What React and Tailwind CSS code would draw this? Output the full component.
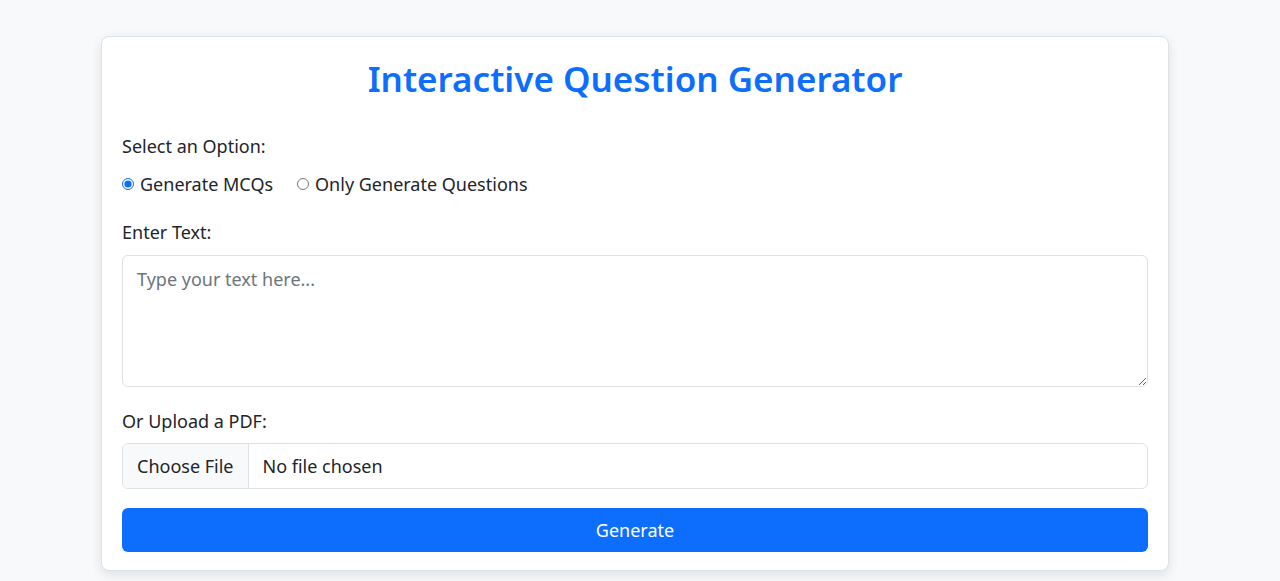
import { useState } from "react";

export default function App() {
  const [mode, setMode] = useState("mcq");
  const [text, setText] = useState("");

  return (
    <div
      className="min-h-screen bg-[#f8f9fa] pt-9 pb-[10px] text-[#212529]"
      style={{ fontFamily: '"Noto Sans", "Open Sans", sans-serif' }}
    >
      <div className="ml-[101px] w-[1068px] rounded-lg border border-[#dee2e6] bg-white px-5 pt-[16px] pb-[18px] shadow-[0_4px_12px_rgba(0,0,0,0.1)]">
        {/* Heading */}
        <h1 className="text-center text-[35px] font-semibold leading-[52px] text-[#0d6efd]">
          Interactive Question Generator
        </h1>

        {/* Mode */}
        <p className="mt-[29px] text-[18px] leading-[24px]">Select an Option:</p>
        <div className="mt-[14px] flex items-center gap-6 text-[18px] leading-[24px]">
          <label className="flex items-center gap-[6px]">
            <input
              type="radio"
              name="mode"
              checked={mode === "mcq"}
              onChange={() => setMode("mcq")}
              className="m-0 h-3 w-3 accent-[#0d6efd]"
            />
            Generate MCQs
          </label>
          <label className="flex items-center gap-[6px]">
            <input
              type="radio"
              name="mode"
              checked={mode === "questions"}
              onChange={() => setMode("questions")}
              className="m-0 h-3 w-3 accent-[#0d6efd]"
            />
            Only Generate Questions
          </label>
        </div>

        {/* Text input */}
        <p className="mt-6 text-[18px] leading-[24px]">Enter Text:</p>
        <textarea
          value={text}
          onChange={(e) => setText(e.target.value)}
          placeholder="Type your text here..."
          className="mt-[11px] block h-[132px] w-full rounded-md border border-[#dee2e6] px-[14px] py-[10px] text-[18px] leading-[26px] placeholder:text-[#6c757d] focus:outline-none"
        />

        {/* PDF */}
        <p className="mt-[22px] text-[18px] leading-[24px]">Or Upload a PDF:</p>
        <label className="mt-[10px] flex h-[46px] w-full cursor-pointer items-stretch overflow-hidden rounded-md border border-[#dee2e6] text-[18px]">
          <input type="file" accept="application/pdf" className="hidden" />
          <span className="flex items-center border-r border-[#dee2e6] bg-[#f8f9fa] px-[14px]">
            Choose File
          </span>
          <span className="flex items-center px-[14px]">No file chosen</span>
        </label>

        {/* Submit */}
        <button
          type="button"
          className="mt-[19px] flex h-[44px] w-full items-center justify-center rounded-md bg-[#0d6efd] text-[18px] text-white"
        >
          Generate
        </button>
      </div>
    </div>
  );
}
